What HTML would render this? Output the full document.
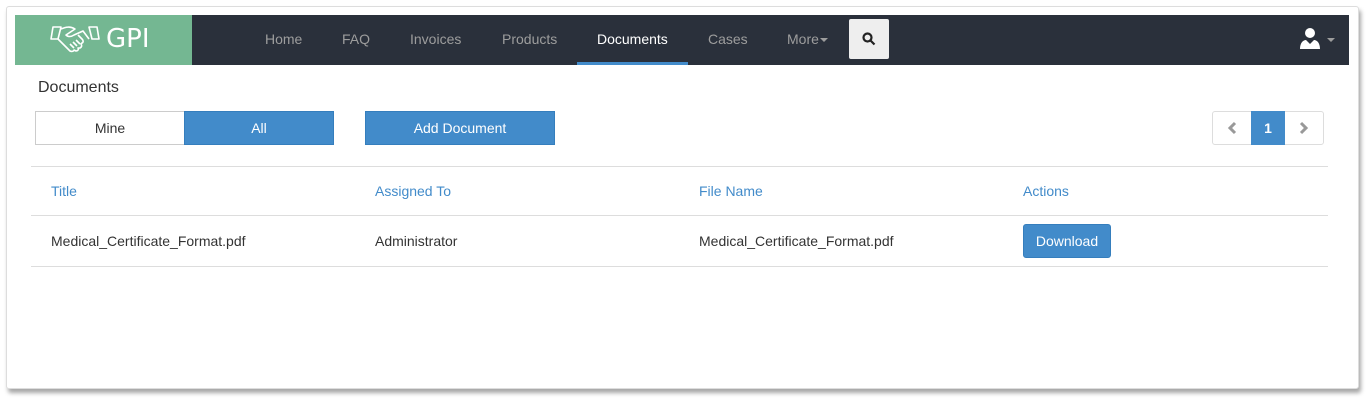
<!DOCTYPE html>
<html><head><style>
*{box-sizing:border-box;margin:0;padding:0}
body{width:1371px;height:401px;background:#fff;font-family:"Liberation Sans",sans-serif;font-size:14px;color:#333;position:relative;overflow:hidden}
.card{position:absolute;left:6px;top:6px;width:1353px;height:383px;background:#fff;border:1px solid #ddd;border-radius:3px;box-shadow:2px 4px 4px rgba(0,0,0,.35)}
.nav{position:absolute;left:15px;top:15px;width:1334px;height:50px;background:#2a303b}
.logo{position:absolute;left:0;top:0;width:177px;height:50px;background:#74b792;color:#fff}
.logo span{position:absolute;left:91px;top:9px;font-size:26px;font-family:"DejaVu Sans",sans-serif}
.nav a{position:absolute;top:16px;color:#9d9d9d;font-size:14px;text-decoration:none}
.nav a.act{color:#fff}
.caret{display:inline-block;width:0;height:0;border-left:4px solid transparent;border-right:4px solid transparent;border-top:4px solid #9d9d9d;vertical-align:middle;margin-left:1px}
.ul{position:absolute;left:562px;top:47px;width:111px;height:3px;background:#428bca}
.search{position:absolute;left:834px;top:4px;width:40px;height:40px;background:#eee;border-radius:2px}
.btn{position:absolute;height:34px;line-height:32px;text-align:center;font-size:14px;border:1px solid #357ebd;background:#428bca;color:#fff}
.h{position:absolute;top:183px;color:#428bca}
.r{position:absolute;top:233px}
.line{position:absolute;left:31px;width:1297px;height:1px;background:#ddd}
</style></head><body>
<div class="card"></div>
<div class="nav">
 <div class="logo">
  <svg style="position:absolute;left:35px;top:9px" width="50" height="30" viewBox="0 0 50 30" fill="none" stroke="#fff" stroke-width="1.6" stroke-linejoin="round"><path d="M3 3h8l-3 12H1z"/><path d="M47 3h-8l3 12h7z"/><path d="M11 5c5-2 9-3 14 0l-9 6c2 2 5 2 8 0l9-4 6 8"/><path d="M8 15l12 12c2 1 4 0 4-1l2 1c2 0 3-2 2-3l2 0c2-1 2-3 1-4l1-1c2-1 1-3 0-4l-4-4"/><path d="M20 20l4 4M23 18l4 4M26 16l4 4"/></svg>
  <span>GPI</span>
 </div>
 <a style="left:250px">Home</a>
 <a style="left:327px">FAQ</a>
 <a style="left:395px">Invoices</a>
 <a style="left:487px">Products</a>
 <a class="act" style="left:582px">Documents</a>
 <a style="left:693px">Cases</a>
 <a style="left:772px">More<span class="caret"></span></a>
 <div class="ul"></div>
 <div class="search"><svg style="position:absolute;left:13px;top:13px" width="14" height="14" viewBox="0 0 14 14" fill="none" stroke="#222" stroke-width="2.2"><circle cx="5.5" cy="5.5" r="4"/><path d="M8.5 8.5l4 4"/></svg></div>
 <svg style="position:absolute;left:1284px;top:13px" width="22" height="22" viewBox="0 0 22 22" fill="#fff"><circle cx="11" cy="5" r="5"/><path d="M1 21c0-6 3-9 6-9l4 4 4-4c3 0 6 3 6 9z"/></svg>
 <span class="caret" style="position:absolute;left:1311px;top:23px"></span>
</div>
<div style="position:absolute;left:38px;top:79px;font-size:16px">Documents</div>
<div class="btn" style="left:35px;top:111px;width:150px;background:#fff;color:#333;border-color:#ccc">Mine</div>
<div class="btn" style="left:184px;top:111px;width:150px">All</div>
<div class="btn" style="left:365px;top:111px;width:190px">Add Document</div>
<div style="position:absolute;left:1212px;top:111px;width:112px;height:34px;border:1px solid #ddd;border-radius:3px"></div>
<div style="position:absolute;left:1251px;top:111px;width:34px;height:34px;background:#428bca;color:#fff;text-align:center;line-height:34px;font-weight:bold">1</div>
<svg style="position:absolute;left:1226px;top:121px" width="12" height="14" viewBox="0 0 12 14"><path d="M9 2L4 7l5 5" fill="none" stroke="#999" stroke-width="3"/></svg>
<svg style="position:absolute;left:1298px;top:121px" width="12" height="14" viewBox="0 0 12 14"><path d="M3 2l5 5-5 5" fill="none" stroke="#999" stroke-width="3"/></svg>
<div class="line" style="top:166px"></div>
<div class="h" style="left:51px">Title</div>
<div class="h" style="left:375px">Assigned To</div>
<div class="h" style="left:699px">File Name</div>
<div class="h" style="left:1023px">Actions</div>
<div class="line" style="top:215px"></div>
<div class="r" style="left:51px">Medical_Certificate_Format.pdf</div>
<div class="r" style="left:375px">Administrator</div>
<div class="r" style="left:699px">Medical_Certificate_Format.pdf</div>
<div class="btn" style="left:1023px;top:224px;width:88px;border-radius:3px">Download</div>
<div class="line" style="top:266px"></div>
</body></html>
